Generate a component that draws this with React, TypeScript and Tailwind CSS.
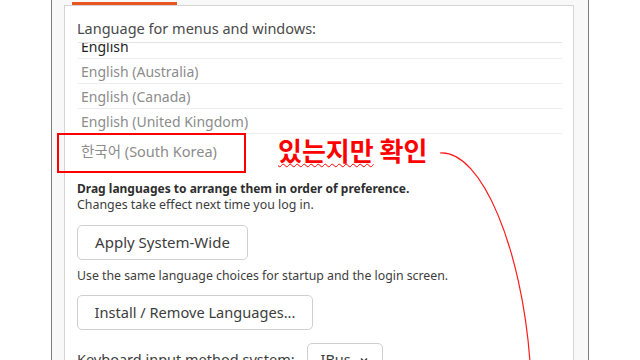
import React from 'react';

const languages = [
  { name: 'English', active: true },
  { name: 'English (Australia)' },
  { name: 'English (Canada)' },
  { name: 'English (United Kingdom)' },
];

function App() {
  return (
    <div
      className="relative w-[640px] h-[360px] overflow-hidden bg-white text-[#3d3d3d]"
      style={{ fontFamily: '"Noto Sans", "Noto Sans CJK KR", sans-serif' }}
    >
      <div className="ml-[51px] w-[538px] h-full flex bg-[#f8f8f8] border-l border-r border-[#7d7d7d]">
        <div className="ml-[12px] w-[510px] h-full flex flex-col">
          {/* tab strip */}
          <div className="h-[5px] flex items-start">
            <div className="ml-[8px] mt-[2px] w-[105px] h-[3px] bg-[#e95420]" />
          </div>
          <div className="flex-1 bg-white border-l border-t border-r border-[#d4d4d4] pl-[12px] pr-[11px]">
            <p className="mt-[14px] text-[14.5px] leading-[16px] text-[#4a4a4a]">
              Language for menus and windows:
            </p>
            <div className="mt-[6px] ml-[1px] h-[127px] overflow-hidden border-t border-[#e3e3e3]">
              <div className="-mt-[9px]">
                {languages.map((l) => (
                  <div
                    key={l.name}
                    className={`h-[25px] flex items-center pl-[3px] border-b border-[#ededed] text-[14px] ${
                      l.active ? 'text-[#1e1e1e]' : 'text-[#8c8c8c]'
                    }`}
                  >
                    {l.name}
                  </div>
                ))}
                <div className="h-[35px] flex items-center pl-[3px] text-[14.5px] text-[#8c8c8c]">
                  한국어 (South Korea)
                </div>
              </div>
            </div>
            <p className="mt-[12px] text-[12px] leading-[16px] font-bold text-[#2e2e2e]">
              Drag languages to arrange them in order of preference.
            </p>
            <p className="text-[12.4px] leading-[16px] text-[#3d3d3d]">
              Changes take effect next time you log in.
            </p>
            <button className="mt-[12px] w-[171px] h-[35px] rounded-[5px] border border-[#cfcfcf] bg-white text-[15px] text-[#3d3d3d]">
              Apply System-Wide
            </button>
            <p className="mt-[8px] text-[12.3px] leading-[15px] text-[#3d3d3d]">
              Use the same language choices for startup and the login screen.
            </p>
            <button className="mt-[12px] w-[236px] h-[35px] rounded-[5px] border border-[#cfcfcf] bg-white text-[14.6px] text-[#3d3d3d]">
              Install / Remove Languages...
            </button>
            <div className="mt-[13px] flex items-start gap-[12px]">
              <span className="mt-[8px] text-[14.5px] leading-[16px] text-[#3d3d3d]">
                Keyboard input method system:
              </span>
              <div className="w-[76px] h-[34px] rounded-[5px] border border-[#cfcfcf] flex items-center justify-center gap-[8px] text-[14.5px]">
                <span>IBus</span>
                <svg width="10" height="10" viewBox="0 0 10 10" fill="none" stroke="#3d3d3d" strokeWidth="1.5">
                  <path d="M2 3.5 L5 6.5 L8 3.5" />
                </svg>
              </div>
            </div>
          </div>
        </div>
      </div>

      {/* annotation overlays */}
      <div className="absolute left-[57px] top-[133px] w-[189px] h-[40px] border-2 border-[#ff0000]" />
      <div
        className="absolute left-[278px] top-[135px] text-[26px] leading-[30px] font-bold text-[#ff0000]"
        style={{ fontFamily: '"Noto Sans CJK KR", sans-serif' }}
      >
        <span className="underline decoration-wavy decoration-[#ff0000] decoration-1 underline-offset-[2px]">있는지만</span> 확인
      </div>
      <svg className="absolute left-0 top-0" width="640" height="360" viewBox="0 0 640 360" fill="none">
        <path d="M440 153 C 482 150, 522 250, 530 362" stroke="#ff1a1a" strokeWidth="1.2" />
      </svg>
    </div>
  );
}

export default App;
